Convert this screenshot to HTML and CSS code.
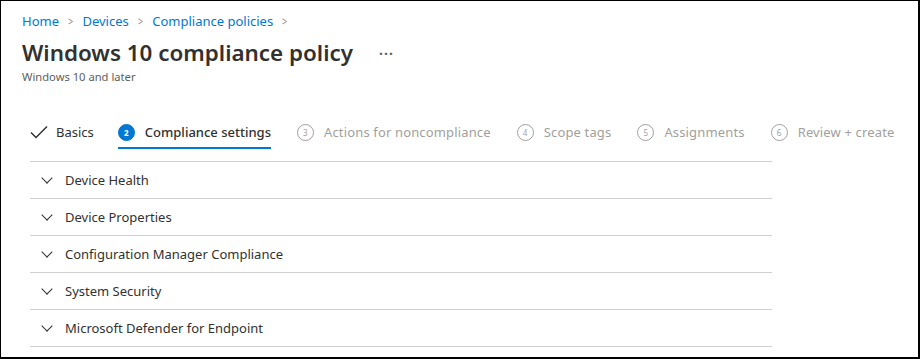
FILE: index.html
```html
<!DOCTYPE html>
<html lang="en">
<head>
    <meta charset="UTF-8">
    <title>Windows 10 compliance policy</title>
    <link rel="stylesheet" href="styles.css">
</head>
<body>
    <div class="frame">
        <nav class="crumbs">
            <a>Home</a><span class="sep">&gt;</span>
            <a>Devices</a><span class="sep">&gt;</span>
            <a>Compliance policies</a><span class="sep">&gt;</span>
        </nav>

        <header class="head">
            <h1>Windows 10 compliance policy</h1>
            <span class="more">&middot;&middot;&middot;</span>
        </header>
        <div class="sub">Windows 10 and later</div>

        <ul class="steps">
            <li class="done">
                <svg width="18" height="14" viewBox="0 0 18 14"><path d="M1 7.5 L6 12.5 L17 1.5" fill="none" stroke="#323130" stroke-width="1.5"/></svg>
                <span>Basics</span>
            </li>
            <li class="current"><i>2</i><span>Compliance settings</span></li>
            <li><i>3</i><span>Actions for noncompliance</span></li>
            <li><i>4</i><span>Scope tags</span></li>
            <li><i>5</i><span>Assignments</span></li>
            <li><i>6</i><span>Review + create</span></li>
        </ul>

        <div class="sections">
            <div class="row"><span class="chev"></span>Device Health</div>
            <div class="row"><span class="chev"></span>Device Properties</div>
            <div class="row"><span class="chev"></span>Configuration Manager Compliance</div>
            <div class="row"><span class="chev"></span>System Security</div>
            <div class="row"><span class="chev"></span>Microsoft Defender for Endpoint</div>
        </div>
    </div>
</body>
</html>
```

FILE: styles.css
```css
html, body {
    margin: 0;
    padding: 0;
}
body {
    font-family: "Noto Sans", "Open Sans", sans-serif;
    color: #323130;
    font-size: 13px;
}
.frame {
    box-sizing: border-box;
    width: 920px;
    height: 359px;
    border: 1px solid #000;
    border-right-width: 2px;
    border-bottom-width: 2px;
    padding: 8px 0 0 21px;
    overflow: hidden;
}
.crumbs {
    display: flex;
    align-items: center;
    height: 24px;
    font-size: 13px;
    & a {
        color: #0078d4;
    }
    & .sep {
        color: #8a8886;
        margin: 0 8px;
        transform: scaleX(0.7);
    }
}
.head {
    display: flex;
    align-items: center;
    margin-top: 4px;
    & h1 {
        margin: 0;
        font-size: 22.4px;
        font-weight: 600;
        line-height: 32px;
    }
    & .more {
        margin-left: 26px;
        font-size: 14px;
        font-weight: 700;
        letter-spacing: 1px;
        color: #605e5c;
    }
}
.sub {
    font-size: 11.2px;
    color: #605e5c;
    margin-top: 0;
}
.steps {
    list-style: none;
    margin: 31px 0 0 8px;
    padding: 0;
    display: flex;
    gap: 26px;
    & li {
        display: flex;
        align-items: center;
        gap: 10px;
        height: 34px;
        box-sizing: border-box;
        color: #a19f9d;
        font-size: 13px;
        letter-spacing: 0.15px;
    }
    & i {
        font-style: normal;
        width: 15px;
        height: 15px;
        border: 1px solid #a19f9d;
        border-radius: 50%;
        font-size: 8px;
        display: grid;
        place-items: center;
    }
    & .done {
        color: #323130;
        gap: 8px;
        letter-spacing: 0;
    }
    & .current {
        color: #323130;
        font-weight: 500;
        letter-spacing: 0;
        border-bottom: 2px solid #0078d4;
        padding-top: 2px;
        margin-left: -2px;
        & i {
            background: #0078d4;
            border-color: #0078d4;
            color: #fff;
            font-weight: 700;
        }
    }
}
.sections {
    width: 742px;
    margin: 12px 0 0 8px;
    border-top: 1px solid #d2d0ce;
}
.row {
    display: flex;
    align-items: center;
    height: 36px;
    border-bottom: 1px solid #d2d0ce;
    font-size: 13px;
    & .chev {
        width: 7px;
        height: 7px;
        border-right: 1.3px solid #323130;
        border-bottom: 1.3px solid #323130;
        transform: rotate(45deg);
        margin: -4px 0 0 13px;
        margin-right: 14px;
    }
}
```
